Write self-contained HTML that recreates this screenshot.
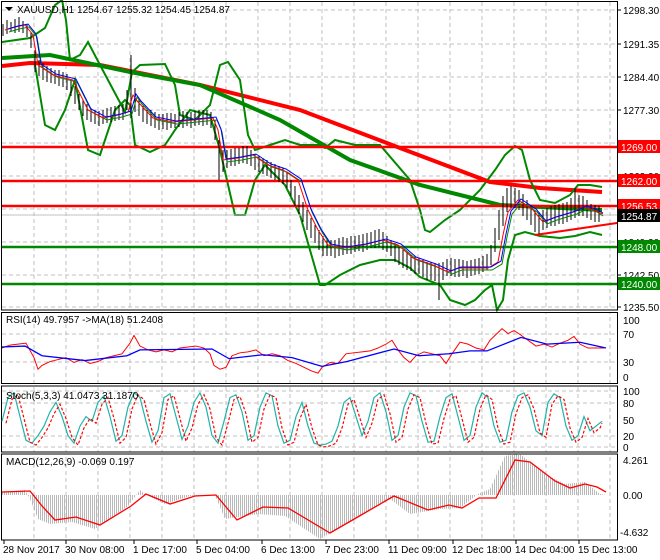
<!DOCTYPE html><html><head><meta charset="utf-8"><style>
body{margin:0;background:#fff;width:660px;height:560px;overflow:hidden}
svg{display:block;font-family:"Liberation Sans",sans-serif}
</style></head><body>
<svg width="660" height="560" viewBox="0 0 660 560" xmlns="http://www.w3.org/2000/svg" font-size="10">
<defs>
<pattern id="hb" width="2" height="4" patternUnits="userSpaceOnUse"><rect x="0" y="0" width="1" height="4" fill="#b8b8b8"/></pattern>
</defs>
<g stroke="#c0c0c0" stroke-dasharray="4,3">
<path d="M34 2V540M66 2V540M98 2V540M130 2V540M162 2V540M194 2V540M226 2V540M258 2V540M290 2V540M322 2V540M354 2V540M386 2V540M418 2V540M450 2V540M482 2V540M514 2V540M546 2V540M578 2V540M610 2V540"/>
<path d="M2 10H617M2 44H617M2 77H617M2 110H617M2 143H617M2 176H617M2 209H617M2 242H617M2 275H617M2 307H617"/>
<path d="M2 334H617M2 362H617M2 391H617M2 403H617M2 436H617M2 447H617"/>
</g>
<rect x="0" y="310" width="660" height="3" fill="#fff"/><rect x="0" y="384" width="660" height="2" fill="#fff"/><rect x="0" y="452" width="660" height="2" fill="#fff"/>
<polyline fill="none" stroke="#f00" stroke-width="4" points="2,66 30,63 100,65 200,85 300,110 400,148 490,182 540,188 602,192"/>
<polyline fill="none" stroke="#080" stroke-width="4" points="2,58 50,55 130,72 200,85 280,120 350,160 420,185 500,205 602,210"/>
<polyline fill="none" stroke="#080" stroke-width="2" points="2,42 30,38 45,28 55,5 62,0 66,20 70,60 80,55 88,42 100,65 125,112 132,72 140,65 165,64 175,85 180,115 195,120 210,105 220,65 228,62 240,80 248,135 255,150 270,145 285,140 300,145 320,145 325,148 335,140 355,145 380,145 410,180 420,210 425,230 430,232 445,220 460,210 480,190 495,170 505,155 515,146 522,150 530,180 540,200 555,203 570,195 578,185 590,185 602,187"/>
<polyline fill="none" stroke="#080" stroke-width="2" points="35,65 45,125 55,130 65,110 75,80 88,150 100,155 115,110 125,100 130,105 135,145 150,152 165,145 175,130 190,110 210,115 220,150 235,215 245,215 255,180 265,165 285,185 300,215 320,285 325,285 340,275 360,265 380,260 395,260 410,268 420,277 440,285 450,300 465,305 475,300 485,290 492,285 497,310 503,300 508,260 515,235 525,232 540,236 560,238 575,236 590,232 602,235"/>
<line x1="535" y1="235" x2="617" y2="223" stroke="#f00" stroke-width="2"/>
<g stroke-width="2.5"><line x1="2" y1="147" x2="617" y2="147" stroke="#f00"/><line x1="2" y1="181" x2="617" y2="181" stroke="#f00"/><line x1="2" y1="206" x2="617" y2="206" stroke="#f00"/><line x1="2" y1="247" x2="617" y2="247" stroke="#080"/><line x1="2" y1="284" x2="617" y2="284" stroke="#080"/></g>
<line x1="2" y1="215" x2="617" y2="215" stroke="#c0c0c0"/>
<path stroke="#000" stroke-width="1" fill="none" d="M3 24V36M7 20V34M11 22V31M15 19V33M19 17V32M23 21V33M27 24V37M31 32V48M35 50V72M39 60V76M43 63V80M47 66V82M51 68V83M55 70V84M59 70V86M63 72V87M67 74V90M71 80V96M75 86V104M79 94V110M83 100V116M87 104V120M91 108V122M95 110V124M99 111V126M103 110V124M107 108V123M111 107V122M115 106V121M119 105V120M123 104V120M127 90V110M131 55V118M135 88V112M139 100V116M143 106V122M147 110V124M151 110V126M155 112V128M159 114V130M163 114V129M167 113V130M171 113V128M175 114V128M179 112V127M183 111V128M187 112V126M191 112V128M195 111V126M199 110V125M203 110V126M207 110V125M211 112V128M215 120V140M219 140V180M223 150V172M227 150V168M231 149V166M235 148V166M239 148V164M243 146V163M247 146V164M251 150V166M255 154V170M259 156V172M263 158V174M267 160V176M271 162V178M275 164V180M279 166V182M283 168V184M287 172V188M291 180V196M295 186V206M299 195V214M303 202V222M307 210V230M311 218V238M315 225V243M319 230V250M323 236V256M327 238V256M331 240V256M335 240V258M339 238V256M343 237V255M347 238V254M351 236V254M355 236V252M359 235V251M363 234V252M367 233V250M371 232V248M375 230V248M379 229V247M383 232V250M387 236V252M391 240V256M395 243V262M399 247V265M403 250V268M407 252V270M411 255V271M415 256V274M419 258V274M423 260V277M427 262V280M431 262V280M435 263V281M439 263V300M443 262V280M447 259V276M451 258V276M455 259V277M459 259V277M463 260V276M467 261V278M471 260V276M475 259V275M479 258V274M483 256V272M487 254V270M491 245V265M495 228V252M499 210V240M503 196V226M507 188V212M511 186V208M515 188V208M519 190V210M523 194V216M527 200V220M531 205V225M535 210V232M539 212V234M543 210V230M547 208V228M551 206V226M555 205V226M559 204V224M563 203V224M567 202V222M571 198V220M575 188V218M579 195V216M583 196V216M587 200V218M591 204V220M595 205V222M599 206V222"/>
<g fill="none" stroke-width="1">
<polyline stroke="#080" transform="translate(7,2)" points="2,30 12,27 22,25 30,35 35,65 50,75 70,80 85,110 100,118 115,115 125,112 130,95 135,102 150,118 170,122 190,120 210,118 215,130 220,160 235,158 250,155 265,165 280,170 295,180 305,210 315,230 325,245 340,248 360,245 380,240 395,245 410,258 430,265 445,272 455,268 470,268 485,268 495,262 500,235 505,212 515,200 530,210 540,222 550,218 560,215 570,212 580,207 590,210 596,214"/>
<polyline stroke="#f00" transform="translate(3,0)" points="2,30 12,27 22,25 30,35 35,65 50,75 70,80 85,110 100,118 115,115 125,112 130,95 135,102 150,118 170,122 190,120 210,118 215,130 220,160 235,158 250,155 265,165 280,170 295,180 305,210 315,230 325,245 340,248 360,245 380,240 395,245 410,258 430,265 445,272 455,268 470,268 485,268 495,262 500,235 505,212 515,200 530,210 540,222 550,218 560,215 570,212 580,207 590,210 600,214"/>
<polyline stroke="#00f" transform="translate(6,-1)" points="2,30 12,27 22,25 30,35 35,65 50,75 70,80 85,110 100,118 115,115 125,112 130,95 135,102 150,118 170,122 190,120 210,118 215,130 220,160 235,158 250,155 265,165 280,170 295,180 305,210 315,230 325,245 340,248 360,245 380,240 395,245 410,258 430,265 445,272 455,268 470,268 485,268 495,262 500,235 505,212 515,200 530,210 540,222 550,218 560,215 570,212 580,207 590,210 597,214"/>
</g>
<polygon points="5,7 13,7 9,11" fill="#000"/>
<text x="17" y="13">XAUUSD,H1  1254.67 1255.32 1254.45 1254.87</text>
<g>
<path stroke="#000" d="M617 10H621M617 44H621M617 77H621M617 110H621M617 143H621M617 176H621M617 242H621M617 275H621M617 307H621"/>
<text x="623" y="14">1298.30</text><text x="623" y="48">1291.35</text><text x="623" y="81">1284.40</text><text x="623" y="114">1277.30</text><text x="623" y="147">1270.30</text><text x="623" y="180">1263.30</text><text x="623" y="246">1249.30</text><text x="623" y="279">1242.50</text><text x="623" y="311">1235.50</text>
<rect x="618" y="140" width="42" height="13" fill="#f00"/><text x="621" y="151" fill="#fff">1269.00</text>
<rect x="618" y="174" width="42" height="13" fill="#f00"/><text x="621" y="185" fill="#fff">1262.00</text>
<rect x="618" y="199" width="42" height="13" fill="#f00"/><text x="621" y="210" fill="#fff">1256.53</text>
<rect x="618" y="209" width="42" height="13" fill="#000"/><text x="621" y="220" fill="#fff">1254.87</text>
<rect x="618" y="240" width="42" height="13" fill="#080"/><text x="621" y="251" fill="#fff">1248.00</text>
<rect x="618" y="277" width="42" height="13" fill="#080"/><text x="621" y="288" fill="#fff">1240.00</text>
</g>
<g fill="none" stroke="#000"><rect x="1.5" y="1.5" width="616" height="308.5"/><rect x="1.5" y="312.5" width="616" height="71"/><rect x="1.5" y="386" width="616" height="66"/><rect x="1.5" y="454" width="616" height="86"/></g>
<g transform="matrix(1 0 0 0.966 0 9.9)">
<polyline fill="none" stroke="#f00" stroke-width="1" points="2,350 10,347 18,346 26,345 34,360 38,372 42,368 50,364 58,362 66,360 74,365 82,362 90,366 98,364 106,360 114,358 122,356 130,345 134,337 140,348 148,352 156,354 164,352 172,354 180,350 188,349 196,348 204,350 210,356 214,368 220,372 226,370 232,358 240,355 248,354 256,352 264,358 272,356 280,358 288,363 296,366 304,370 312,374 318,376 322,370 330,365 338,366 346,356 354,355 362,354 370,353 378,350 386,346 392,342 398,352 404,360 410,365 416,358 424,354 432,356 440,358 446,366 452,356 460,344 468,346 476,350 484,352 490,342 496,336 502,330 508,335 514,332 520,336 528,342 536,348 544,346 552,349 560,345 568,342 574,338 580,346 588,350 596,350 604,350"/>
<polyline fill="none" stroke="#00f" stroke-width="1.3" points="2,349 25,348 42,358 85,363 127,358 140,352 212,351 229,361 263,357 292,360 322,369 347,364 394,351 419,358 449,356 470,353 487,353 521,339 547,346 580,344 606,350"/>
</g>
<text x="6" y="323">RSI(14) 49.7957  -&gt;MA(18) 51.2408</text>
<text x="623" y="324">100</text><text x="623" y="338">70</text><text x="623" y="366">30</text><text x="623" y="381">0</text>
<g transform="matrix(1 0 0 0.949 0 18)">
<polyline fill="none" stroke="#20b2aa" stroke-width="1.2" points="2,425 8,400 14,395 20,420 26,445 32,448 38,440 44,430 50,415 56,405 62,420 68,440 74,448 80,430 86,420 92,425 98,405 104,398 110,420 116,446 122,440 128,410 134,395 140,400 146,425 152,447 158,435 164,400 170,396 176,420 182,444 188,430 194,405 200,395 206,410 212,440 218,448 224,425 230,400 236,397 242,415 248,445 254,440 260,410 266,395 272,398 278,430 284,448 290,445 296,420 302,405 308,430 314,448 320,450 326,449 332,446 338,430 344,405 350,400 356,420 362,440 368,425 374,400 380,395 386,415 392,445 398,440 404,410 410,395 416,398 422,425 428,447 434,446 440,420 446,400 452,396 458,420 464,445 470,440 476,410 482,395 488,400 494,430 500,447 506,445 512,415 518,398 524,395 530,410 536,435 542,440 548,405 554,396 560,400 566,430 572,445 578,440 584,420 590,435 596,430 602,425"/>
<polyline fill="none" stroke="#f00" stroke-width="1.2" stroke-dasharray="3,2" transform="translate(4,2)" points="2,425 8,400 14,395 20,420 26,445 32,448 38,440 44,430 50,415 56,405 62,420 68,440 74,448 80,430 86,420 92,425 98,405 104,398 110,420 116,446 122,440 128,410 134,395 140,400 146,425 152,447 158,435 164,400 170,396 176,420 182,444 188,430 194,405 200,395 206,410 212,440 218,448 224,425 230,400 236,397 242,415 248,445 254,440 260,410 266,395 272,398 278,430 284,448 290,445 296,420 302,405 308,430 314,448 320,450 326,449 332,446 338,430 344,405 350,400 356,420 362,440 368,425 374,400 380,395 386,415 392,445 398,440 404,410 410,395 416,398 422,425 428,447 434,446 440,420 446,400 452,396 458,420 464,445 470,440 476,410 482,395 488,400 494,430 500,447 506,445 512,415 518,398 524,395 530,410 536,435 542,440 548,405 554,396 560,400 566,430 572,445 578,440 584,420 590,435 596,430 598,425"/>
</g>
<text x="6" y="399">Stoch(5,3,3) 41.0473 31.1870</text>
<text x="623" y="395">100</text><text x="623" y="407">80</text><text x="623" y="424">50</text><text x="623" y="440">20</text><text x="623" y="451">0</text>
<g transform="translate(0,-6)">
<polygon fill="url(#hb)" points="2,501 2,498 25,496 30,505 38,525 50,530 72,528 95,535 128,512 140,496 146,501 165,510 190,502 205,501 215,501 225,525 258,520 285,522 320,545 350,528 390,505 410,520 440,515 460,514 478,500 490,495 505,462 520,460 545,480 565,490 585,488 600,500 606,501"/>
<polyline fill="none" stroke="#f00" stroke-width="1.3" points="2,498 30,497 42,512 55,526 76,523 100,531 131,512 146,500 170,510 195,502 216,501 237,526 263,513 288,514 330,539 356,524 394,502 428,516 449,511 462,514 479,504 496,504 515,466 530,468 555,487 570,494 585,490 597,493 606,498"/>
</g>
<text x="6" y="465">MACD(12,26,9) -0.069 0.197</text>
<text x="623" y="464">4.261</text><text x="623" y="499">0.00</text><text x="620" y="536">-4.632</text>
<path stroke="#000" d="M4 540V544M66 540V544M134 540V544M197 540V544M262 540V544M326 540V544M389 540V544M453 540V544M516 540V544M579 540V544"/>
<text x="3" y="553">28 Nov 2017</text><text x="65" y="553">30 Nov 08:00</text><text x="133" y="553">1 Dec 17:00</text><text x="196" y="553">5 Dec 04:00</text><text x="261" y="553">6 Dec 13:00</text><text x="325" y="553">7 Dec 23:00</text><text x="388" y="553">11 Dec 09:00</text><text x="452" y="553">12 Dec 18:00</text><text x="515" y="553">14 Dec 04:00</text><text x="578" y="553">15 Dec 13:00</text>
</svg>
</body></html>
